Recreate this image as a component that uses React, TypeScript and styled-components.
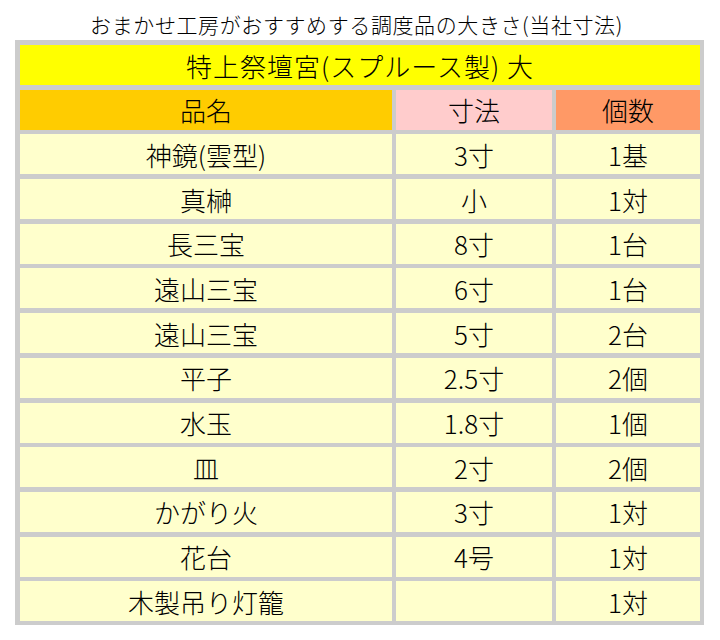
import * as React from "react";
import styled, { createGlobalStyle } from "styled-components";

const rows: [string, string, string][] = [
    ["神鏡(雲型)", "3寸", "1基"],
    ["真榊", "小", "1対"],
    ["長三宝", "8寸", "1台"],
    ["遠山三宝", "6寸", "1台"],
    ["遠山三宝", "5寸", "2台"],
    ["平子", "2.5寸", "2個"],
    ["水玉", "1.8寸", "1個"],
    ["皿", "2寸", "2個"],
    ["かがり火", "3寸", "1対"],
    ["花台", "4号", "1対"],
    ["木製吊り灯籠", "", "1対"],
];

const headers = [
    { label: "品名", color: "#ffcc00" },
    { label: "寸法", color: "#ffcccc" },
    { label: "個数", color: "#ff9966" },
];

const App = (): JSX.Element => (
    <Root>
        <GlobalStyle />
        <Heading>おまかせ工房がおすすめする調度品の大きさ(当社寸法)</Heading>
        <Table>
            <TitleCell>特上祭壇宮(スプルース製) 大</TitleCell>
            {headers.map((h) => (
                <HeaderCell key={h.label} bg={h.color}>{h.label}</HeaderCell>
            ))}
            {rows.map((row, i) =>
                row.map((text, j) => <Cell key={`${i}-${j}`}>{text}</Cell>)
            )}
        </Table>
    </Root>
);

export default App;


const GlobalStyle = createGlobalStyle`
    html, body {
        margin: 0;
        padding: 0;
        background: #ffffff;
    }
    body {
        font-family: "Noto Sans CJK JP", "Noto Sans", sans-serif;
        font-weight: 300;
        color: #000000;
    }
`;

const Root = styled.div`
    width: 720px;
    height: 640px;
    overflow: hidden;
`;

const Heading = styled.div`
    height: 40px;
    box-sizing: border-box;
    padding: 12px 7px 0 0;
    text-align: center;
    font-size: 21px;
    line-height: 24px;
    letter-spacing: 0.6px;
`;

const Table = styled.div`
    margin-left: 15px;
    width: 689px;
    box-sizing: border-box;
    padding: 5px 4px 4px 5px;
    background-color: #cccccc;
    display: grid;
    grid-template-columns: 372px 156px 144px;
    grid-auto-rows: 40px;
    column-gap: 4px;
    row-gap: 4.7px;
`;

const Cell = styled.div`
    background-color: #ffffcc;
    display: flex;
    align-items: center;
    justify-content: center;
    font-size: 26px;
    line-height: 1;
    padding-top: 1px;
`;

const HeaderCell = styled(Cell)<{ bg: string }>`
    background-color: ${(p) => p.bg};
`;

const TitleCell = styled(Cell)`
    grid-column: 1 / span 3;
    background-color: #ffff00;
    letter-spacing: 1px;
`;
